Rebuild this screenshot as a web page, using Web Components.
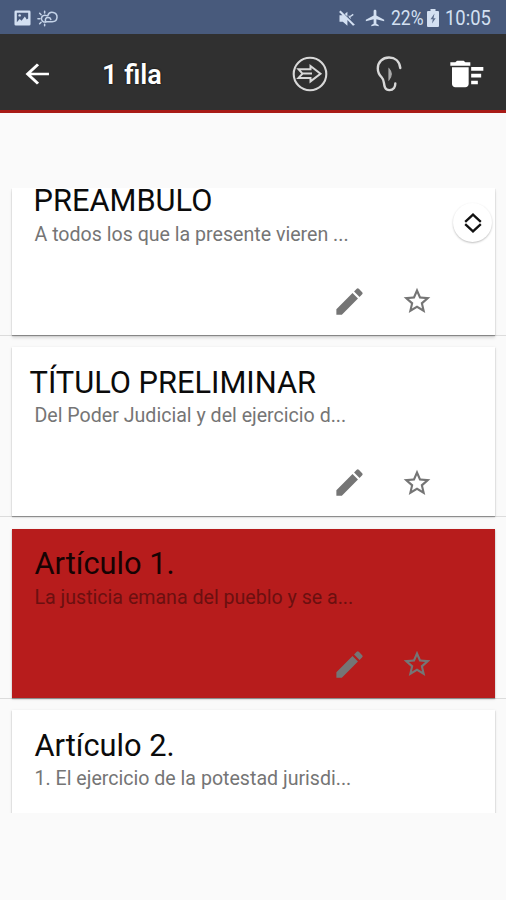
<!DOCTYPE html>
<html lang="es">
<head>
<meta charset="utf-8">
<title>Artículos</title>
<style>
html,body{margin:0;height:100%;background:#fafafa;font-family:Roboto,"Noto Sans",sans-serif}
body{overflow:hidden}
</style>
</head>
<body>
<law-app></law-app>
<script>
const define = (name, html, setup) => customElements.define(name, class extends HTMLElement {
  connectedCallback() {
    if (this.shadowRoot) return;
    const root = this.attachShadow({ mode: 'open' });
    root.innerHTML = html;
    if (setup) setup(this, root);
  }
});

const icons = {
  picture: ['0 0 18 18', '<path fill-rule="evenodd" fill="#d3e0f2" d="M2 .5h14Q17.500 .5 17.500 2v13q0 1.500-1.500 1.500H2Q.5 16.500 .5 15V2Q.5 .5 2 .5zM3 3v10l3-3.500 2 2L11.500 7l2 3L15 9V3z"/><circle cx="6" cy="5.700" r="1.300" fill="#d3e0f2"/>'],
  weather: ['0 0 22 18', '<g fill="none" stroke="#c4d3e8" stroke-width="1.600" stroke-linecap="round"><path d="M9.500 12.500A3.600 3.600 0 1 1 10 6M2.800 3.500l1.500 1.500M8 1.200v2M1 9.200h2M2.800 14.500l1.500-1.500M8 15v1.700"/><path d="M9 12.500h7a5 5 0 1 0-4.800-6.500M9 12.500Q8 8 11.500 8q2.500 0 3 2"/></g>'],
  mute: ['0 0 24 24', '<path fill="#d3e0f2" d="M16.500 12c0-1.770-1.020-3.290-2.500-4.030v2.210l2.450 2.450c.03-.2.050-.41.050-.63zM4.270 2 2.500 3.800 6.500 8H3v8h4l5.500 5v-7l6.700 7.200L21.500 20zM12.500 3.500 9.300 6.300l3.200 3.200zM15 9l4-3 1 1.500-4 3z"/>'],
  plane: ['0 0 24 24', '<path fill="#d3e0f2" d="M22 16v-2l-8.500-5V3.500c0-.83-.67-1.500-1.500-1.500s-1.500.67-1.500 1.500V9L2 14v2l8.500-2.500V19L8 20.500V22l4-1 4 1v-1.500L13.500 19v-5.500L22 16z"/>'],
  battery: ['0 0 12 18', '<path fill="#d3e0f2" d="M3.500 0h5v2H11q1 0 1 1v14q0 1-1 1H1q-1 0-1-1V3q0-1 1-1h2.500z"/><path fill="#5c6e8e" d="M7.500 4.500 3.500 10.200h2.300L5 14.500l3.700-5.200H6.500z"/>'],
  back: ['0 0 24 24', '<path fill="none" stroke="#fff" stroke-width="2.900" d="M23 12H3M12.500 1.500 2.500 12l10 10.500"/>'],
  next: ['0 0 36 36', '<g fill="none" stroke="#d8d8d8"><circle cx="18" cy="18" r="16.300" stroke-width="2.100"/><path stroke-width="2" d="M6.500 13.200h12V10L28.500 17.700l-10 7.700v-3.500h-12l4-4.200zM10.500 17.600H20"/></g>'],
  ear: ['0 0 26 36', '<g fill="none" stroke="#d8d8d8" stroke-width="2.400" stroke-linecap="round"><path d="M24.300 12C23.500 5 18.800 1.500 13 1.500 6.500 1.500 1.800 6 1.800 12.500c0 4.500 1.500 6.500 4 9 3 3 1.500 6.500 3.200 10 1.800 3.500 6.800 3.300 9 .5.900-1.300 1.300-3 1.300-4.500"/><path fill="#aaa" stroke="#aaa" stroke-width="1.200" d="M13 13q4.500 5 0 10.500z"/></g>'],
  sweep: ['0 0 24 24', '<path fill="#fff" d="M14.500 16h4v2.200h-4zm0-8.200h7.300V10h-7.300zm0 4.100h6v2.200h-6zM3 18c0 1.100.9 2 2 2h6c1.100 0 2-.9 2-2V8H3v10zM14 5h-3l-1-1H6L5 5H2v2h12V5z"/>'],
  edit: ['0 0 24 24', '<path fill="#757575" d="M3 17.250V21h3.750L17.810 9.940l-3.750-3.750L3 17.250zM20.710 7.040a1 1 0 0 0 0-1.410l-2.340-2.340a1 1 0 0 0-1.410 0l-1.830 1.830 3.750 3.750 1.830-1.830z"/>'],
  star: ['0 0 24 24', '<path fill="#757575" d="m22 9.240-7.190-.62L12 2 9.190 8.630 2 9.240l5.460 4.730L5.820 21 12 17.270 18.180 21l-1.630-7.030L22 9.240zM12 15.400l-3.760 2.270 1-4.280-3.320-2.880 4.380-.38L12 6.100l1.710 4.040 4.380.38-3.320 2.880 1 4.280L12 15.400z"/>'],
  unfold: ['0 0 18 20', '<path fill="none" stroke="#111" stroke-width="2.300" d="M1.200 8.800 9 1.600l7.800 7.200M1.200 11.200 9 18.400l7.800-7.200"/>']
};

define('law-icon', '<style>:host{display:block;flex:none}svg{display:block;width:100%;height:100%;overflow:visible}</style><svg preserveAspectRatio="none"></svg>', (el, root) => {
  const [box, shapes] = icons[el.getAttribute('name')];
  const svg = root.querySelector('svg');
  svg.setAttribute('viewBox', box);
  svg.innerHTML = shapes;
});

define('status-bar', `<style>
:host{display:flex;box-sizing:border-box;height:34px;padding:2px 14px 0 14px;align-items:center;background:#485a7c;color:#d3e0f2;font-size:20px}
.space{flex:1}
span{display:block;white-space:nowrap;transform-origin:0 50%}
.pct{width:36px;margin-left:6px}.pct span{transform:scaleX(.875)}
.time{width:47px;margin-left:6px}.time span{transform:scaleX(.92)}
</style>
<law-icon name="picture" style="width:17px;height:17px"></law-icon>
<law-icon name="weather" style="width:21px;height:17px;margin-left:6px"></law-icon>
<div class="space"></div>
<law-icon name="mute" style="width:20px;height:19px;margin-right:7px"></law-icon>
<law-icon name="plane" style="width:22px;height:20px;margin-right:-1px"></law-icon>
<div class="pct"><span>22%</span></div>
<law-icon name="battery" style="width:12px;height:18px"></law-icon>
<div class="time"><span>10:05</span></div>`);

define('action-bar', `<style>
:host{display:flex;box-sizing:border-box;height:79px;padding:3px 21px 0 25px;align-items:center;background:#303030;border-bottom:3px solid #a81b17;color:#fff}
h1{flex:1;margin:2px 0 0 52px;font-size:27px;line-height:32px;font-weight:600;text-shadow:0 0 2px #000}
</style>
<law-icon name="back" style="width:25px;height:22px"></law-icon>
<h1><slot></slot></h1>
<law-icon name="next" style="width:36px;height:36px"></law-icon>
<law-icon name="ear" style="width:26px;height:36px;margin-left:48px"></law-icon>
<law-icon name="sweep" style="width:40px;height:40px;margin:0 -2px 0 45px"></law-icon>`);

define('law-card', `<style>
:host{display:flex;flex-direction:column;flex:none;box-sizing:border-box;height:181.5px;padding:11.5px 11px 0 12px;border-bottom:1px solid #dcdcdc}
article{flex:1;box-sizing:border-box;padding:22.500px 62px 16px 22.500px;background:#fff;box-shadow:0 1px 1px rgba(0,0,0,.3),0 1px 3px rgba(0,0,0,.13);display:flex;flex-direction:column}
:host([partial]){height:147.5px;padding-top:0}
:host([partial]) article{padding-top:0;box-shadow:0 1px 1px rgba(0,0,0,.3),0 3px 3px rgba(0,0,0,.13)}
:host([selected]) article{background:#b71c1c}
h2{margin:0 0 8.500px;font-size:30.800px;line-height:26px;font-weight:400;color:#0b0b0b;white-space:nowrap}
p{margin:0;font-size:19.600px;line-height:24px;color:#757575;white-space:nowrap}
:host([selected]) h2{color:#160303}
:host([selected]) p{color:#6b1010}
footer{margin-top:auto;display:flex;justify-content:flex-end;align-items:center;gap:34.500px}
.e{width:35px;height:35px}.s{width:32px;height:32px}
</style>
<article><h2><slot name="title"></slot></h2><p><slot></slot></p>
<footer><law-icon class="e" name="edit"></law-icon><law-icon class="s" name="star"></law-icon></footer></article>`);

define('scroll-handle', `<style>
:host{position:absolute;right:14px;top:25px;width:39px;height:39px;border-radius:50%;background:#fff;box-shadow:0 1px 2px rgba(0,0,0,.25);display:grid;place-items:center}
</style><law-icon name="unfold" style="width:18px;height:20px"></law-icon>`);

define('law-app', `<style>
:host{display:flex;flex-direction:column;height:900px;background:#fafafa}
main{position:relative;box-sizing:border-box;margin-top:65px;padding-top:10px;height:635px;overflow:hidden;display:flex;flex-direction:column}
</style>
<status-bar></status-bar>
<action-bar>1 fila</action-bar>
<main>
<law-card partial><span slot="title" style="margin-left:-1px">PREAMBULO</span><span>A todos los que la presente vieren ...</span></law-card>
<law-card><span slot="title" style="margin-left:-5px">TÍTULO PRELIMINAR</span><span>Del Poder Judicial y del ejercicio d...</span></law-card>
<law-card selected><span slot="title">Artículo 1.</span><span>La justicia emana del pueblo y se a...</span></law-card>
<law-card><span slot="title">Artículo 2.</span><span>1. El ejercicio de la potestad jurisdi...</span></law-card>
<scroll-handle></scroll-handle>
</main>`);
</script>
</body>
</html>
